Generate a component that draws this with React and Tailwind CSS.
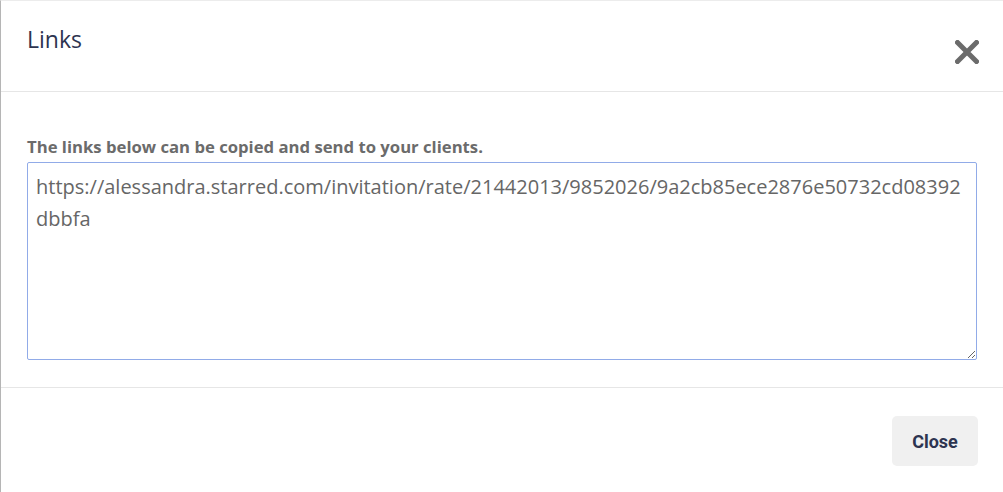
import React from 'react';

const url = 'https://alessandra.starred.com/invitation/rate/21442013/9852026/9a2cb85ece2876e50732cd08392dbbfa';

export default function App() {
    return (
        <div className="h-[492px] w-[1003px] bg-white border-l border-t border-l-[#b5b5b5] border-t-[#ececec] flex flex-col" style={{ fontFamily: '"Open Sans", sans-serif' }}>
            <div className="h-[91px] flex items-start justify-between border-b border-[#e6e6e6] pl-[26px] pr-[24px]">
                <h2 className="mt-[24px] text-[23px] leading-[28px] text-[#2d3450]">Links</h2>
                <button className="mt-[39px] w-6 h-6 flex items-center justify-center">
                    <svg width="24" height="24" viewBox="0 0 24 24">
                        <path d="M2.5 2.5 L21.5 21.5 M21.5 2.5 L2.5 21.5" stroke="#6b6b6b" strokeWidth="5" strokeLinecap="square" />
                    </svg>
                </button>
            </div>
            <div className="h-[296px] border-b border-[#e6e6e6] px-[26px] pt-[45px]">
                <label className="block text-[16.7px] leading-[20px] font-bold text-[#6b6b6b] mb-[5px]">
                    The links below can be copied and send to your clients.
                </label>
                <textarea
                    readOnly
                    defaultValue={url}
                    className="block w-[950px] h-[198px] border border-[#91abe8] rounded-[2px] px-[8px] pt-[8px] pb-[8px] text-[20px] leading-[32px] text-[#666666] outline-none resize-y break-all"
                    style={{ fontFamily: '"Open Sans", sans-serif' }}
                />
            </div>
            <div className="flex-1 flex justify-end items-start pt-[28px] pr-[25px]">
                <button className="w-[86px] h-[50px] rounded-[5px] bg-[#f0f0f0] text-[18px] font-bold text-[#2d3450]" style={{ fontFamily: 'Roboto, sans-serif' }}>
                    Close
                </button>
            </div>
        </div>
    );
}
